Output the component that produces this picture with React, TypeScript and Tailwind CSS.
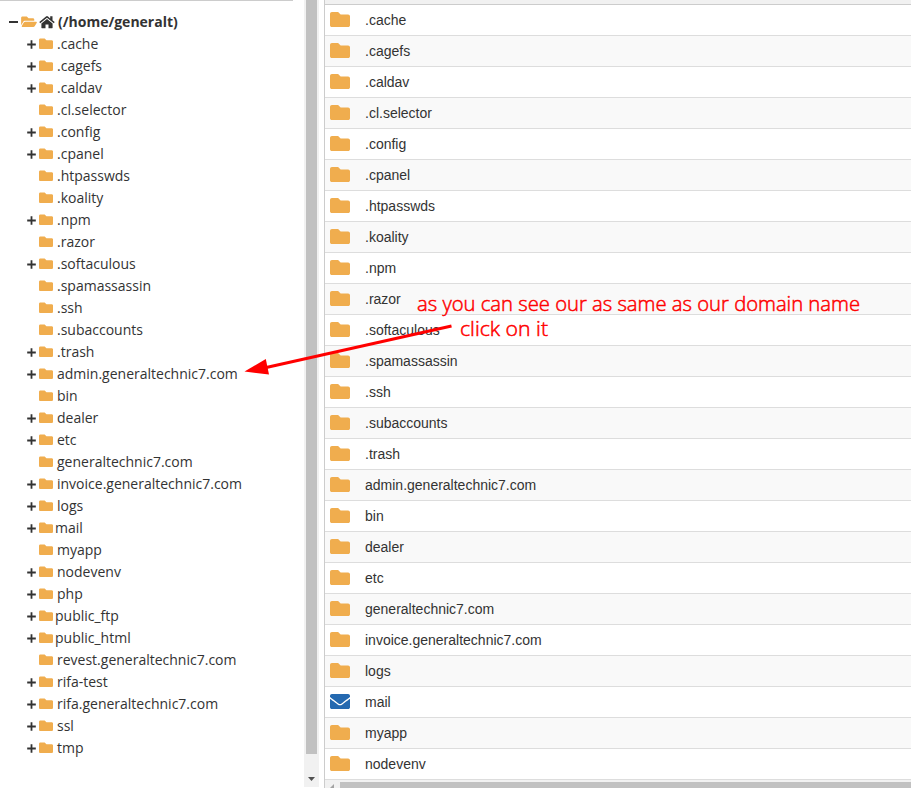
import { FaEnvelope, FaFolder, FaFolderOpen } from "react-icons/fa";

type Entry = { name: string; open?: boolean; tight?: boolean };

const entries: Entry[] = [
  { name: ".cache", open: true },
  { name: ".cagefs", open: true },
  { name: ".caldav", open: true },
  { name: ".cl.selector" },
  { name: ".config", open: true },
  { name: ".cpanel", open: true },
  { name: ".htpasswds" },
  { name: ".koality" },
  { name: ".npm", open: true },
  { name: ".razor" },
  { name: ".softaculous", open: true },
  { name: ".spamassassin" },
  { name: ".ssh" },
  { name: ".subaccounts" },
  { name: ".trash", open: true },
  { name: "admin.generaltechnic7.com", open: true },
  { name: "bin" },
  { name: "dealer", open: true },
  { name: "etc", open: true },
  { name: "generaltechnic7.com" },
  { name: "invoice.generaltechnic7.com", open: true },
  { name: "logs", open: true },
  { name: "mail", open: true, tight: true },
  { name: "myapp" },
  { name: "nodevenv", open: true },
  { name: "php", open: true },
  { name: "public_ftp", open: true, tight: true },
  { name: "public_html", open: true, tight: true },
  { name: "revest.generaltechnic7.com" },
  { name: "rifa-test", open: true },
  { name: "rifa.generaltechnic7.com", open: true },
  { name: "ssl", open: true },
  { name: "tmp", open: true },
];

const listed = entries.slice(0, 25);

function Plus() {
  return (
    <svg className="h-[9px] w-[9px]" viewBox="0 0 9 9">
      <path d="M4.5 0.2V8.8M0.2 4.5H8.8" stroke="#333" strokeWidth="1.8" />
    </svg>
  );
}

function Home() {
  return (
    <svg className="h-[13px] w-4" viewBox="0 0 16 13" fill="#333">
      <path d="M8 3.5 2.4 8v4.3c0 .4.3.7.7.7h3.4V9h3v4h3.4c.4 0 .7-.3.7-.7V8z" />
      <path d="M15.700 6.500 13.500 4.700V.8h-2.300V2.900L9 1a1.600 1.600 0 0 0-2 0L.3 6.500l.9 1.200L8 2.300l6.800 5.400z" />
    </svg>
  );
}

function Tree() {
  return (
    <nav className="w-[304px] shrink-0 font-['Open_Sans',sans-serif] text-[14px] leading-[22px] text-[#333]">
      <div className="h-px w-[293px] bg-[#ccc]" />
      <div className="mt-[10px] flex h-[22px] items-center pl-[9px] font-bold">
        <span className="h-[2px] w-[9px] bg-[#333]" />
        <FaFolderOpen className="ml-[3px] h-[14px] w-[16px] -translate-y-[0.3px] text-[#f0ad4e]" />
        <span className="ml-[2px] -translate-y-[0.5px]">
          <Home />
        </span>
        <span className="ml-[3px]">(/home/generalt)</span>
      </div>
      {entries.map((e) => (
        <div key={e.name} className="flex h-[22px] items-center whitespace-nowrap pl-[27px]">
          <span className="flex w-3">{e.open && <Plus />}</span>
          <FaFolder className="h-[14px] w-[14px] -translate-y-[0.3px] text-[#f0ad4e]" />
          <span className={e.tight ? "ml-[2px]" : "ml-1"}>{e.name}</span>
        </div>
      ))}
    </nav>
  );
}

function Listing() {
  return (
    <main className="ml-[5px] flex min-w-0 grow flex-col border-l border-[#ccc] font-['Liberation_Sans',Arial,sans-serif] text-[14px] text-[#333]">
      <div className="h-[5px] shrink-0 border-b border-[#ccc] bg-[#f1f1f1]" />
      {listed.map((e, i) => (
        <div
          key={e.name}
          className={`flex h-[31px] shrink-0 items-center border-b border-[#ddd] pl-[5px] ${i % 2 ? "bg-[#f9f9f9]" : "bg-white"}`}
        >
          {e.name === "mail" ? (
            <FaEnvelope className="h-5 w-5 -translate-y-[0.5px] text-[#2469b0]" />
          ) : (
            <FaFolder className="h-5 w-5 -translate-y-[0.5px] text-[#f0ad4e]" />
          )}
          <span className="ml-[15px]">{e.name}</span>
        </div>
      ))}
      <div className="flex h-2 shrink-0 bg-[#f1f1f1] pt-[2px]">
        <svg className="h-[6px] w-[15px]" viewBox="0 0 15 6">
          <path d="M5 6 9 2V6z" fill="#a3a3a3" />
        </svg>
        <div className="grow bg-[#c1c1c1]" />
      </div>
    </main>
  );
}

export default function App() {
  return (
    <div className="relative flex h-[788px] w-[911px] overflow-hidden bg-white">
      <Tree />
      <div className="flex h-[787px] w-[15px] shrink-0 flex-col items-center bg-[#f1f1f1]">
        <div className="h-[754px] w-[11px] bg-[#c1c1c1]" />
        <svg className="mt-[23px] h-1 w-[7px]" viewBox="0 0 7 4">
          <path d="M0 0H7L3.5 4z" fill="#505050" />
        </svg>
      </div>
      <Listing />
      <svg className="absolute left-0 top-0 h-[788px] w-[911px]" viewBox="0 0 911 788">
        <path d="M451.500 326 264 368" stroke="#f00" strokeWidth="3" />
        <path d="M244.500 371.500 265.800 359 269 374.500z" fill="#f00" />
        <g fill="#f00" className="font-['Open_Sans','Noto_Sans',sans-serif] text-[20px] font-light" stroke="#f00" strokeWidth="0.5">
          <text x="417" y="311" textLength="443" lengthAdjust="spacingAndGlyphs">
            as you can see our as same as our domain name
          </text>
          <text x="460" y="336" textLength="88" lengthAdjust="spacingAndGlyphs">
            click on it
          </text>
        </g>
      </svg>
    </div>
  );
}
